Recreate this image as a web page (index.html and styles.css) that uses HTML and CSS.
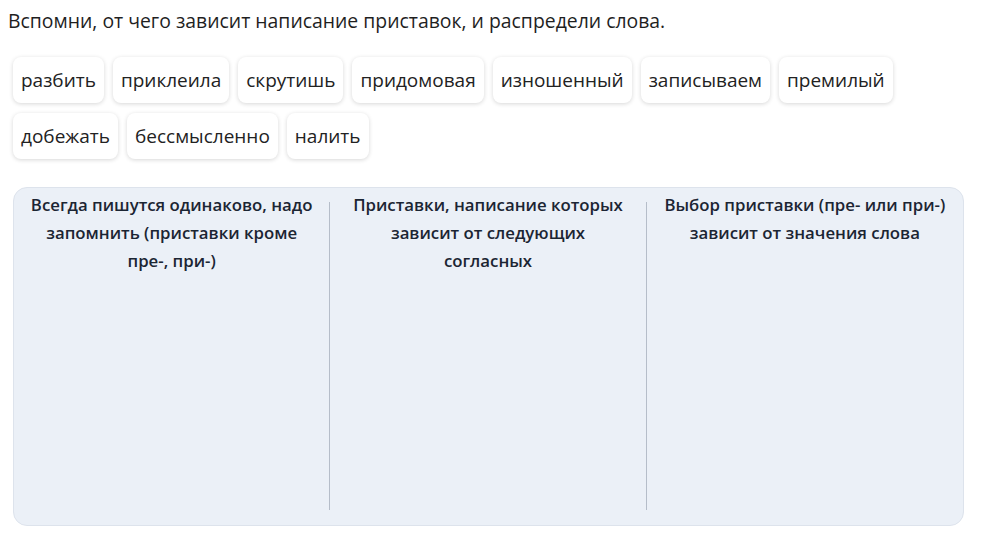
FILE: index.html
```html
<!DOCTYPE html>
<html lang="ru">
<head>
    <meta charset="UTF-8">
    <title>Приставки</title>
    <link rel="stylesheet" href="styles.css">
</head>
<body>
    <div class="task">
        <p class="question">Вспомни, от чего зависит написание приставок, и распредели слова.</p>

        <div class="words">
            <span class="word">разбить</span>
            <span class="word">приклеила</span>
            <span class="word">скрутишь</span>
            <span class="word">придомовая</span>
            <span class="word">изношенный</span>
            <span class="word">записываем</span>
            <span class="word">премилый</span>
            <span class="word">добежать</span>
            <span class="word">бессмысленно</span>
            <span class="word">налить</span>
        </div>

        <div class="groups">
            <div class="group">
                <h3>Всегда пишутся одинаково, надо запомнить (приставки кроме пре-, при-)</h3>
            </div>
            <div class="group">
                <h3>Приставки, написание которых зависит от следующих согласных</h3>
            </div>
            <div class="group">
                <h3>Выбор приставки (пре- или при-) зависит от значения слова</h3>
            </div>
        </div>
    </div>
</body>
</html>
```

FILE: styles.css
```css
* {
    box-sizing: border-box;
    margin: 0;
    padding: 0;
}

body {
    font-family: "Open Sans", Arial, sans-serif;
    color: #1f1f1f;
    background: #fff;
}

.task {
    padding: 9px 35px 0 8px;
}

.question {
    font-size: 19.4px;
    line-height: 24px;
}

.words {
    display: flex;
    flex-wrap: wrap;
    gap: 10px 9px;
    margin: 24px 0 0 5px;
}

.word {
    background: #fff;
    border-radius: 8px;
    box-shadow: 0 1px 4px rgba(0, 0, 0, 0.16);
    padding: 10px 8px;
    font-size: 19px;
    line-height: 26px;
    color: #222;
}

.groups {
    display: grid;
    grid-template-columns: repeat(3, 1fr);
    margin: 28px 0 0 5px;
    height: 339px;
    background: #ebf0f7;
    border: 1px solid #dde3ec;
    border-radius: 14px;
    padding: 14px 0 15px;
}

.group {
    padding: 0 16px;
    border-right: 1px solid #b5bdc9;
}

.group:last-child {
    border-right: none;
}

.group h3 {
    font-size: 16.8px;
    font-weight: 600;
    line-height: 28px;
    text-align: center;
    color: #1b2533;
    margin-top: -11px;
}
```
